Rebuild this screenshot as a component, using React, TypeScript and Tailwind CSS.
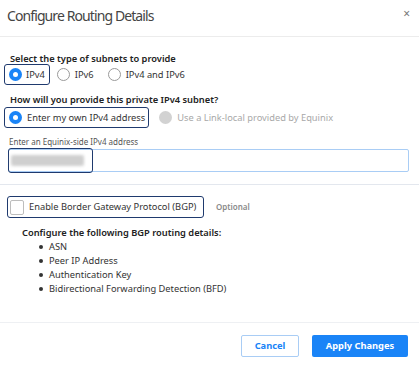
import React from "react";

function Radio({ checked, disabled }: { checked?: boolean; disabled?: boolean }) {
  if (disabled) return <span className="inline-block w-[13px] h-[13px] rounded-full bg-[#d2d2d2] shrink-0" />;
  if (checked)
    return (
      <span className="inline-flex w-[13px] h-[13px] rounded-full bg-[#1a84f7] items-center justify-center shrink-0">
        <span className="w-[5px] h-[5px] rounded-full bg-white" />
      </span>
    );
  return <span className="inline-block w-[13px] h-[13px] rounded-full border border-[#9a9a9a] bg-white shrink-0" />;
}

export default function App() {
  return (
    <div
      className="w-[419px] h-[369px] bg-white text-[#333] flex flex-col"
      style={{ fontFamily: '"Noto Sans", "Open Sans", sans-serif' }}
    >
      <div className="h-[37px] shrink-0 flex items-center justify-between pl-[7px] pr-[9px] pb-[5px] border-b border-[#ececec]">
        <span className="text-[14px] tracking-[-0.9px] text-[#444] leading-none">Configure Routing Details</span>
        <span className="text-[12px] text-[#777] leading-none mb-[3px]">×</span>
      </div>
      <div className="pl-[4px] pt-[16px]">
        <div className="pl-[6px] text-[9.3px] font-semibold leading-[12px] text-[#222]">
          Select the type of subnets to provide
        </div>
        <div className="flex items-center mt-[-1px]">
          <div className="flex items-center gap-[4px] h-[21px] pl-[4px] pr-[4px] border border-[#1f3a6e] rounded-[3px]">
            <Radio checked />
            <span className="text-[9.3px] text-[#333]">IPv4</span>
          </div>
          <div className="flex items-center gap-[5px] ml-[7px]">
            <Radio />
            <span className="text-[9.3px] text-[#333]">IPv6</span>
          </div>
          <div className="flex items-center gap-[5px] ml-[14px]">
            <Radio />
            <span className="text-[9.3px] text-[#333]">IPv4 and IPv6</span>
          </div>
        </div>
        <div className="pl-[6px] mt-[9px] text-[9.3px] font-semibold leading-[12px] text-[#222]">
          How will you provide this private IPv4 subnet?
        </div>
        <div className="flex items-center mt-[1px]">
          <div className="flex items-center gap-[5px] h-[21px] pl-[4px] pr-[3px] border border-[#1f3a6e] rounded-[3px]">
            <Radio checked />
            <span className="text-[9.3px] text-[#333]">Enter my own IPv4 address</span>
          </div>
          <div className="flex items-center gap-[5px] ml-[10px]">
            <Radio disabled />
            <span className="text-[9.3px] text-[#a8a8a8]">Use a Link-local provided by Equinix</span>
          </div>
        </div>
        <div className="pl-[5px] mt-[9px] text-[8px] leading-[10px] text-[#555]">Enter an Equinix-side IPv4 address</div>
        <div className="relative mt-[2px] ml-[4px] w-[401px] h-[23px] border border-[#a9cdf5] rounded-[2px]">
          <div className="absolute left-[-1px] top-[-2px] w-[85px] h-[25px] border border-[#1f3a6e] rounded-[3px] flex items-center pl-[2px]">
            <div className="w-[73px] h-[11px] bg-[#cfcfcf] rounded-[2px] blur-[1.5px]" />
          </div>
        </div>
      </div>
      <div className="mt-[12px] border-t border-[#e3e7ee]" />
      <div className="pl-[7px] pt-[11px]">
        <div className="flex items-center">
          <div className="flex items-center gap-[5px] h-[22px] w-[197px] pl-[2px] border border-[#1f3a6e] rounded-[3px]">
            <span className="w-[14px] h-[15px] border border-[#bdbdbd] rounded-[2px] bg-white shrink-0" />
            <span className="text-[9.3px] text-[#333] whitespace-nowrap">Enable Border Gateway Protocol (BGP)</span>
          </div>
          <span className="ml-[12px] text-[8px] font-semibold text-[#8a8a8a]">Optional</span>
        </div>
        <div className="pl-[15px] mt-[9px] text-[9.3px] font-semibold leading-[12px] text-[#222]">
          Configure the following BGP routing details:
        </div>
        <ul className="pl-[32px] mt-[1px] text-[9.3px] text-[#333]">
          {["ASN", "Peer IP Address", "Authentication Key", "Bidirectional Forwarding Detection (BFD)"].map((t) => (
            <li key={t} className="flex items-center h-[14px]">
              <span className="w-[4px] h-[4px] rounded-full bg-[#333] mr-[6px] shrink-0" />
              {t}
            </li>
          ))}
        </ul>
      </div>
      <div className="mt-auto border-t border-[#eef0f3]" />
      <div className="flex justify-end gap-[13px] pr-[11px] pt-[12px] pb-[12px]">
        <button className="w-[58px] h-[22px] border border-[#a9cdf5] rounded-[2px] bg-white text-[9.3px] font-bold text-[#1a84f7]">
          Cancel
        </button>
        <button className="w-[96px] h-[22px] rounded-[2px] bg-[#1a84f7] text-[9.3px] font-bold text-white">
          Apply Changes
        </button>
      </div>
    </div>
  );
}
